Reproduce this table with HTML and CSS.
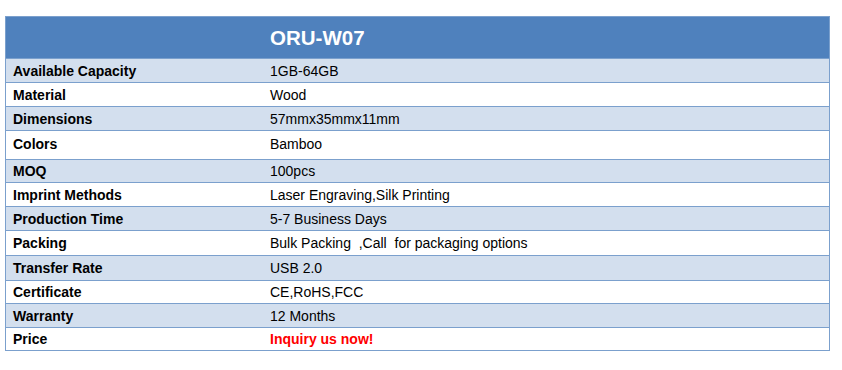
FILE: index.html
```html
<!DOCTYPE html>
<html lang="en">
<head>
<meta charset="utf-8">
<title>ORU-W07</title>
<link rel="stylesheet" href="styles.css">
</head>
<body>
<div class="page">
  <table class="spec">
    <thead>
      <tr class="head">
        <th class="label"></th>
        <th class="value">ORU-W07</th>
      </tr>
    </thead>
    <tbody>
      <tr class="band"><td class="label">Available Capacity</td><td class="value">1GB-64GB</td></tr>
      <tr><td class="label">Material</td><td class="value">Wood</td></tr>
      <tr class="band"><td class="label">Dimensions</td><td class="value">57mmx35mmx11mm</td></tr>
      <tr class="tall"><td class="label">Colors</td><td class="value">Bamboo</td></tr>
      <tr class="band short"><td class="label">MOQ</td><td class="value">100pcs</td></tr>
      <tr><td class="label">Imprint Methods</td><td class="value">Laser Engraving,Silk Printing</td></tr>
      <tr class="band"><td class="label">Production Time</td><td class="value">5-7 Business Days</td></tr>
      <tr class="wide"><td class="label">Packing</td><td class="value">Bulk Packing &nbsp;,Call &nbsp;for packaging options</td></tr>
      <tr class="band wide"><td class="label">Transfer Rate</td><td class="value">USB 2.0</td></tr>
      <tr class="short"><td class="label">Certificate</td><td class="value">CE,RoHS,FCC</td></tr>
      <tr class="band"><td class="label">Warranty</td><td class="value">12 Months</td></tr>
      <tr class="short"><td class="label">Price</td><td class="value price">Inquiry us now!</td></tr>
    </tbody>
  </table>
</div>
</body>
</html>
```
FILE: styles.css
```css
html, body {
  margin: 0;
  padding: 0;
  background: #ffffff;
}

.page {
  padding: 16px 0 0 5px;
}

.spec {
  width: 825px;
  border-collapse: collapse;
  font-family: "Liberation Sans", Arial, sans-serif;
  font-size: 14px;
  color: #000000;
  border: 1px solid #7ba0cd;
}

.spec th,
.spec td {
  padding: 0;
  text-align: left;
  vertical-align: middle;
  border-top: 1px solid #7ba0cd;
  border-bottom: 1px solid #7ba0cd;
}

.spec .label {
  width: 249px;
  padding-left: 7px;
  font-weight: bold;
}

.spec .value {
  padding-left: 8px;
  font-weight: normal;
}

.spec .head th {
  height: 41px;
  background: #4f81bd;
  color: #ffffff;
  font-size: 20.5px;
  font-weight: bold;
}

.spec td {
  height: 23px;
}

.band td {
  background: #d3dfee;
}

.spec .tall td {
  height: 25px;
  padding-bottom: 3px;
}

.spec .short td {
  height: 22px;
}

.spec .wide td {
  height: 24px;
}

.spec .price {
  color: #ff0000;
  font-weight: bold;
}
```
